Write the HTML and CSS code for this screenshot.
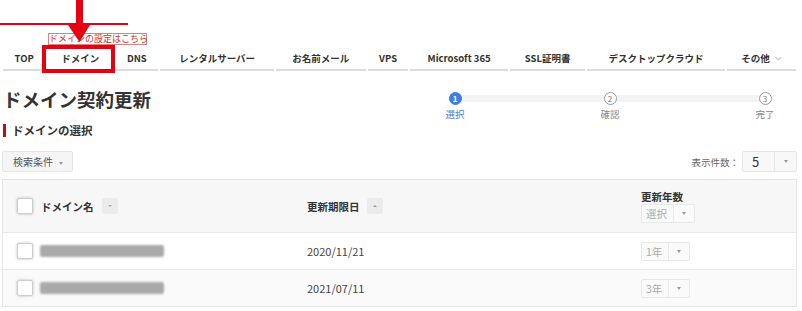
FILE: index.html
```html
<!DOCTYPE html>
<html lang="ja">
<head>
    <meta charset="UTF-8">
    <meta name="viewport" content="width=device-width, initial-scale=1.0">
    <title>ドメイン契約更新</title>
    <link rel="stylesheet" href="styles.css">
</head>
<body>
    <!-- Annotation overlay -->
    <div class="annot">
        <div class="annot-line"></div>
        <div class="tooltip">ドメインの設定はこちら</div>
        <svg class="annot-arrow" width="24" height="44" viewBox="0 0 24 44">
            <rect x="9" y="0" width="7" height="27" fill="#e60012"/>
            <polygon points="1,25 23,25 12.5,42" fill="#e60012"/>
        </svg>
        <div class="annot-box"></div>
    </div>

    <div class="page">
        <!-- Global nav -->
        <ul class="gnav">
            <li class="gnav-item">TOP</li>
            <li class="gnav-item">ドメイン</li>
            <li class="gnav-item">DNS</li>
            <li class="gnav-item">レンタルサーバー</li>
            <li class="gnav-item">お名前メール</li>
            <li class="gnav-item">VPS</li>
            <li class="gnav-item">Microsoft 365</li>
            <li class="gnav-item">SSL証明書</li>
            <li class="gnav-item">デスクトップクラウド</li>
            <li class="gnav-item">その他<svg class="chev" width="7" height="5" viewBox="0 0 7 5"><path d="M0.5 1 L3.5 4 L6.5 1" fill="none" stroke="#aaa" stroke-width="1"/></svg></li>
        </ul>

        <!-- Title + steps -->
        <div class="head">
            <h1>ドメイン契約更新</h1>
            <div class="steps">
                <div class="step current">
                    <span class="step-num">1</span>
                    <span class="step-label">選択</span>
                </div>
                <div class="step">
                    <span class="step-num">2</span>
                    <span class="step-label">確認</span>
                </div>
                <div class="step">
                    <span class="step-num">3</span>
                    <span class="step-label">完了</span>
                </div>
            </div>
        </div>

        <h2 class="sub-title">ドメインの選択</h2>

        <div class="toolbar">
            <button class="filter-btn">検索条件<span class="caret"></span></button>
            <div class="per-page">
                <span>表示件数：</span>
                <div class="per-select">
                    <span class="per-value">5</span>
                    <span class="per-arrow"><span class="caret"></span></span>
                </div>
            </div>
        </div>

        <!-- Domain list -->
        <table class="list">
            <thead>
                <tr>
                    <th class="col-name">
                        <div class="cell">
                            <span class="check"></span>
                            <span>ドメイン名</span>
                            <span class="sort"><span class="caret"></span></span>
                        </div>
                    </th>
                    <th class="col-date">
                        <div class="cell">
                            <span>更新期限日</span>
                            <span class="sort up"><span class="caret"></span></span>
                        </div>
                    </th>
                    <th class="col-years">
                        <div class="years-head">更新年数</div>
                        <div class="year-select">
                            <span class="ys-value">選択</span>
                            <span class="ys-arrow"><span class="caret"></span></span>
                        </div>
                    </th>
                </tr>
            </thead>
            <tbody>
                <tr>
                    <td>
                        <div class="cell">
                            <span class="check"></span>
                            <span class="masked"></span>
                        </div>
                    </td>
                    <td class="date">2020/11/21</td>
                    <td>
                        <div class="year-select">
                            <span class="ys-value">1年</span>
                            <span class="ys-arrow"><span class="caret"></span></span>
                        </div>
                    </td>
                </tr>
                <tr class="alt">
                    <td>
                        <div class="cell">
                            <span class="check"></span>
                            <span class="masked"></span>
                        </div>
                    </td>
                    <td class="date">2021/07/11</td>
                    <td>
                        <div class="year-select">
                            <span class="ys-value">3年</span>
                            <span class="ys-arrow"><span class="caret"></span></span>
                        </div>
                    </td>
                </tr>
            </tbody>
        </table>
    </div>
</body>
</html>
```

FILE: styles.css
```css
/* General */
body {
    margin: 0;
    position: relative;
    font-family: "Noto Sans CJK JP", sans-serif;
    color: #333;
    background: #fff;
}
.page {
    padding: 0 5px 0 2px;
}
.caret {
    display: inline-block;
    width: 0;
    height: 0;
    border-top: 3px solid #888;
    border-left: 2.5px solid transparent;
    border-right: 2.5px solid transparent;
    vertical-align: middle;
}

/* Annotation overlay */
.annot {
    position: absolute;
    top: 0;
    left: 0;
    z-index: 5;
}
.annot-line {
    position: absolute;
    top: 23px;
    left: 0;
    width: 128px;
    height: 2px;
    background: #e60012;
}
.tooltip {
    position: absolute;
    top: 33px;
    left: 48px;
    width: 99px;
    height: 12px;
    box-sizing: border-box;
    border: 1px solid #d98080;
    background: #fff;
    color: #d03030;
    font-size: 9px;
    line-height: 10px;
    text-align: center;
    white-space: nowrap;
}
.annot-arrow {
    position: absolute;
    top: 0;
    left: 67px;
}
.annot-box {
    position: absolute;
    top: 45px;
    left: 42px;
    width: 73px;
    height: 28px;
    box-sizing: border-box;
    border: 4px solid #e60012;
}

/* Global nav */
.gnav {
    display: table;
    width: 100%;
    margin: 46px 0 0;
    padding: 0;
    list-style: none;
}
.gnav-item {
    display: table-cell;
    height: 23px;
    padding: 0 8px 2px;
    vertical-align: middle;
    text-align: center;
    white-space: nowrap;
    font-size: 9.5px;
    font-weight: 700;
    color: #333;
    background: linear-gradient(#dcdcdc, #dcdcdc) center bottom / calc(100% - 2px) 2px no-repeat;
}
.chev {
    margin-left: 5px;
    vertical-align: middle;
}

/* Title + steps */
.head {
    display: flex;
    align-items: flex-start;
    margin-top: 15px;
}
h1 {
    margin: 0 0 0 1px;
    font-size: 18.5px;
    line-height: 26px;
    font-weight: 700;
    color: #333;
}
.steps {
    position: relative;
    display: flex;
    justify-content: space-between;
    width: 326px;
    margin: 6px 24px 0 auto;
}
.steps::before {
    content: '';
    position: absolute;
    top: 3px;
    left: 8px;
    right: 8px;
    height: 7px;
    background: #f3f3f3;
}
.step {
    display: flex;
    flex-direction: column;
    align-items: center;
    width: 16px;
}
.step-num {
    position: relative;
    z-index: 1;
    width: 13px;
    height: 13px;
    box-sizing: border-box;
    border: 1px solid #999;
    border-radius: 50%;
    background: #fff;
    color: #777;
    font-size: 8px;
    line-height: 11px;
    text-align: center;
}
.step.current .step-num {
    border-color: #3b7ee6;
    background: #3b7ee6;
    color: #fff;
    font-weight: 700;
}
.step-label {
    margin-top: 2px;
    font-size: 9.5px;
    line-height: 14px;
    color: #888;
    white-space: nowrap;
}
.step.current .step-label {
    color: #4a7fd0;
}

/* Sub title */
.sub-title {
    margin: 3px 0 0 1px;
    padding-left: 6px;
    border-left: 3px solid #b5121b;
    font-size: 11.5px;
    line-height: 13px;
    font-weight: 700;
    color: #333;
}

/* Toolbar */
.toolbar {
    display: flex;
    align-items: center;
    justify-content: space-between;
    margin-top: 14px;
}
.filter-btn {
    height: 21px;
    padding: 0 9px 0 10px;
    border: 1px solid #e4e4e4;
    border-radius: 2px;
    background: #f5f5f5;
    color: #555;
    font-family: inherit;
    font-size: 10px;
    line-height: 19px;
}
.filter-btn .caret {
    margin-left: 6px;
    border-top-color: #999;
}
.per-page {
    display: flex;
    align-items: center;
    gap: 3px;
    font-size: 9.5px;
    color: #666;
}
.per-select {
    display: flex;
    height: 21px;
    box-sizing: border-box;
    border: 1px solid #e6e6e6;
    border-radius: 2px;
    background: #f8f8f8;
}
.per-value {
    width: 22px;
    padding-left: 9px;
    font-size: 13px;
    line-height: 19px;
    color: #333;
}
.per-arrow {
    display: flex;
    align-items: center;
    justify-content: center;
    width: 21px;
    border-left: 1px solid #e6e6e6;
}
.per-arrow .caret {
    border-top-color: #999;
}

/* Domain list */
.list {
    width: 100%;
    margin-top: 7px;
    border-collapse: collapse;
    border: 1px solid #e6e6e6;
    font-size: 10.5px;
}
.list th {
    height: 52px;
    padding: 0;
    background: #f7f7f7;
    text-align: left;
    vertical-align: middle;
    font-weight: 700;
    color: #333;
}
.list td {
    height: 36px;
    padding: 0;
    border-top: 1px solid #e8e8e8;
    vertical-align: middle;
}
.list tr.alt td {
    background: #fafafa;
}
.col-name {
    width: 290px;
    padding-left: 14px !important;
}
.list td:first-child {
    padding-left: 14px;
}
.col-date {
    width: 334px;
}
.cell {
    display: flex;
    align-items: center;
    gap: 8px;
}
.check {
    width: 16px;
    height: 16px;
    box-sizing: border-box;
    border: 1px solid #cdcdcd;
    border-radius: 2px;
    background: #fff;
    box-shadow: 0 0 3px rgba(0,0,0,.25);
}
.sort {
    display: flex;
    align-items: center;
    justify-content: center;
    width: 16px;
    height: 16px;
    border-radius: 2px;
    background: #ebebeb;
}
.sort .caret {
    border-top-width: 2px;
    border-top-color: #aaa;
}
.sort.up .caret {
    border-top: none;
    border-bottom: 2px solid #999;
}
.col-date .cell {
    gap: 7px;
}
.masked {
    width: 124px;
    height: 12px;
    margin-left: -1px;
    border-radius: 2px;
    background: #aaa;
    filter: blur(1.3px);
}
.date {
    font-size: 11px;
    color: #444;
}
.years-head {
    font-size: 10.5px;
    line-height: 14px;
}
.year-select {
    display: inline-flex;
    height: 19px;
    box-sizing: border-box;
    border: 1px solid #e8e8e8;
    border-radius: 2px;
    background: #fafafa;
    font-weight: 400;
}
.ys-value {
    padding: 0 6px 0 4px;
    font-size: 10.5px;
    line-height: 17px;
    color: #aaa;
}
.ys-arrow {
    display: flex;
    align-items: center;
    justify-content: center;
    width: 20px;
    border-left: 1px solid #e8e8e8;
}
.ys-arrow .caret {
    border-top-color: #999;
}
```
